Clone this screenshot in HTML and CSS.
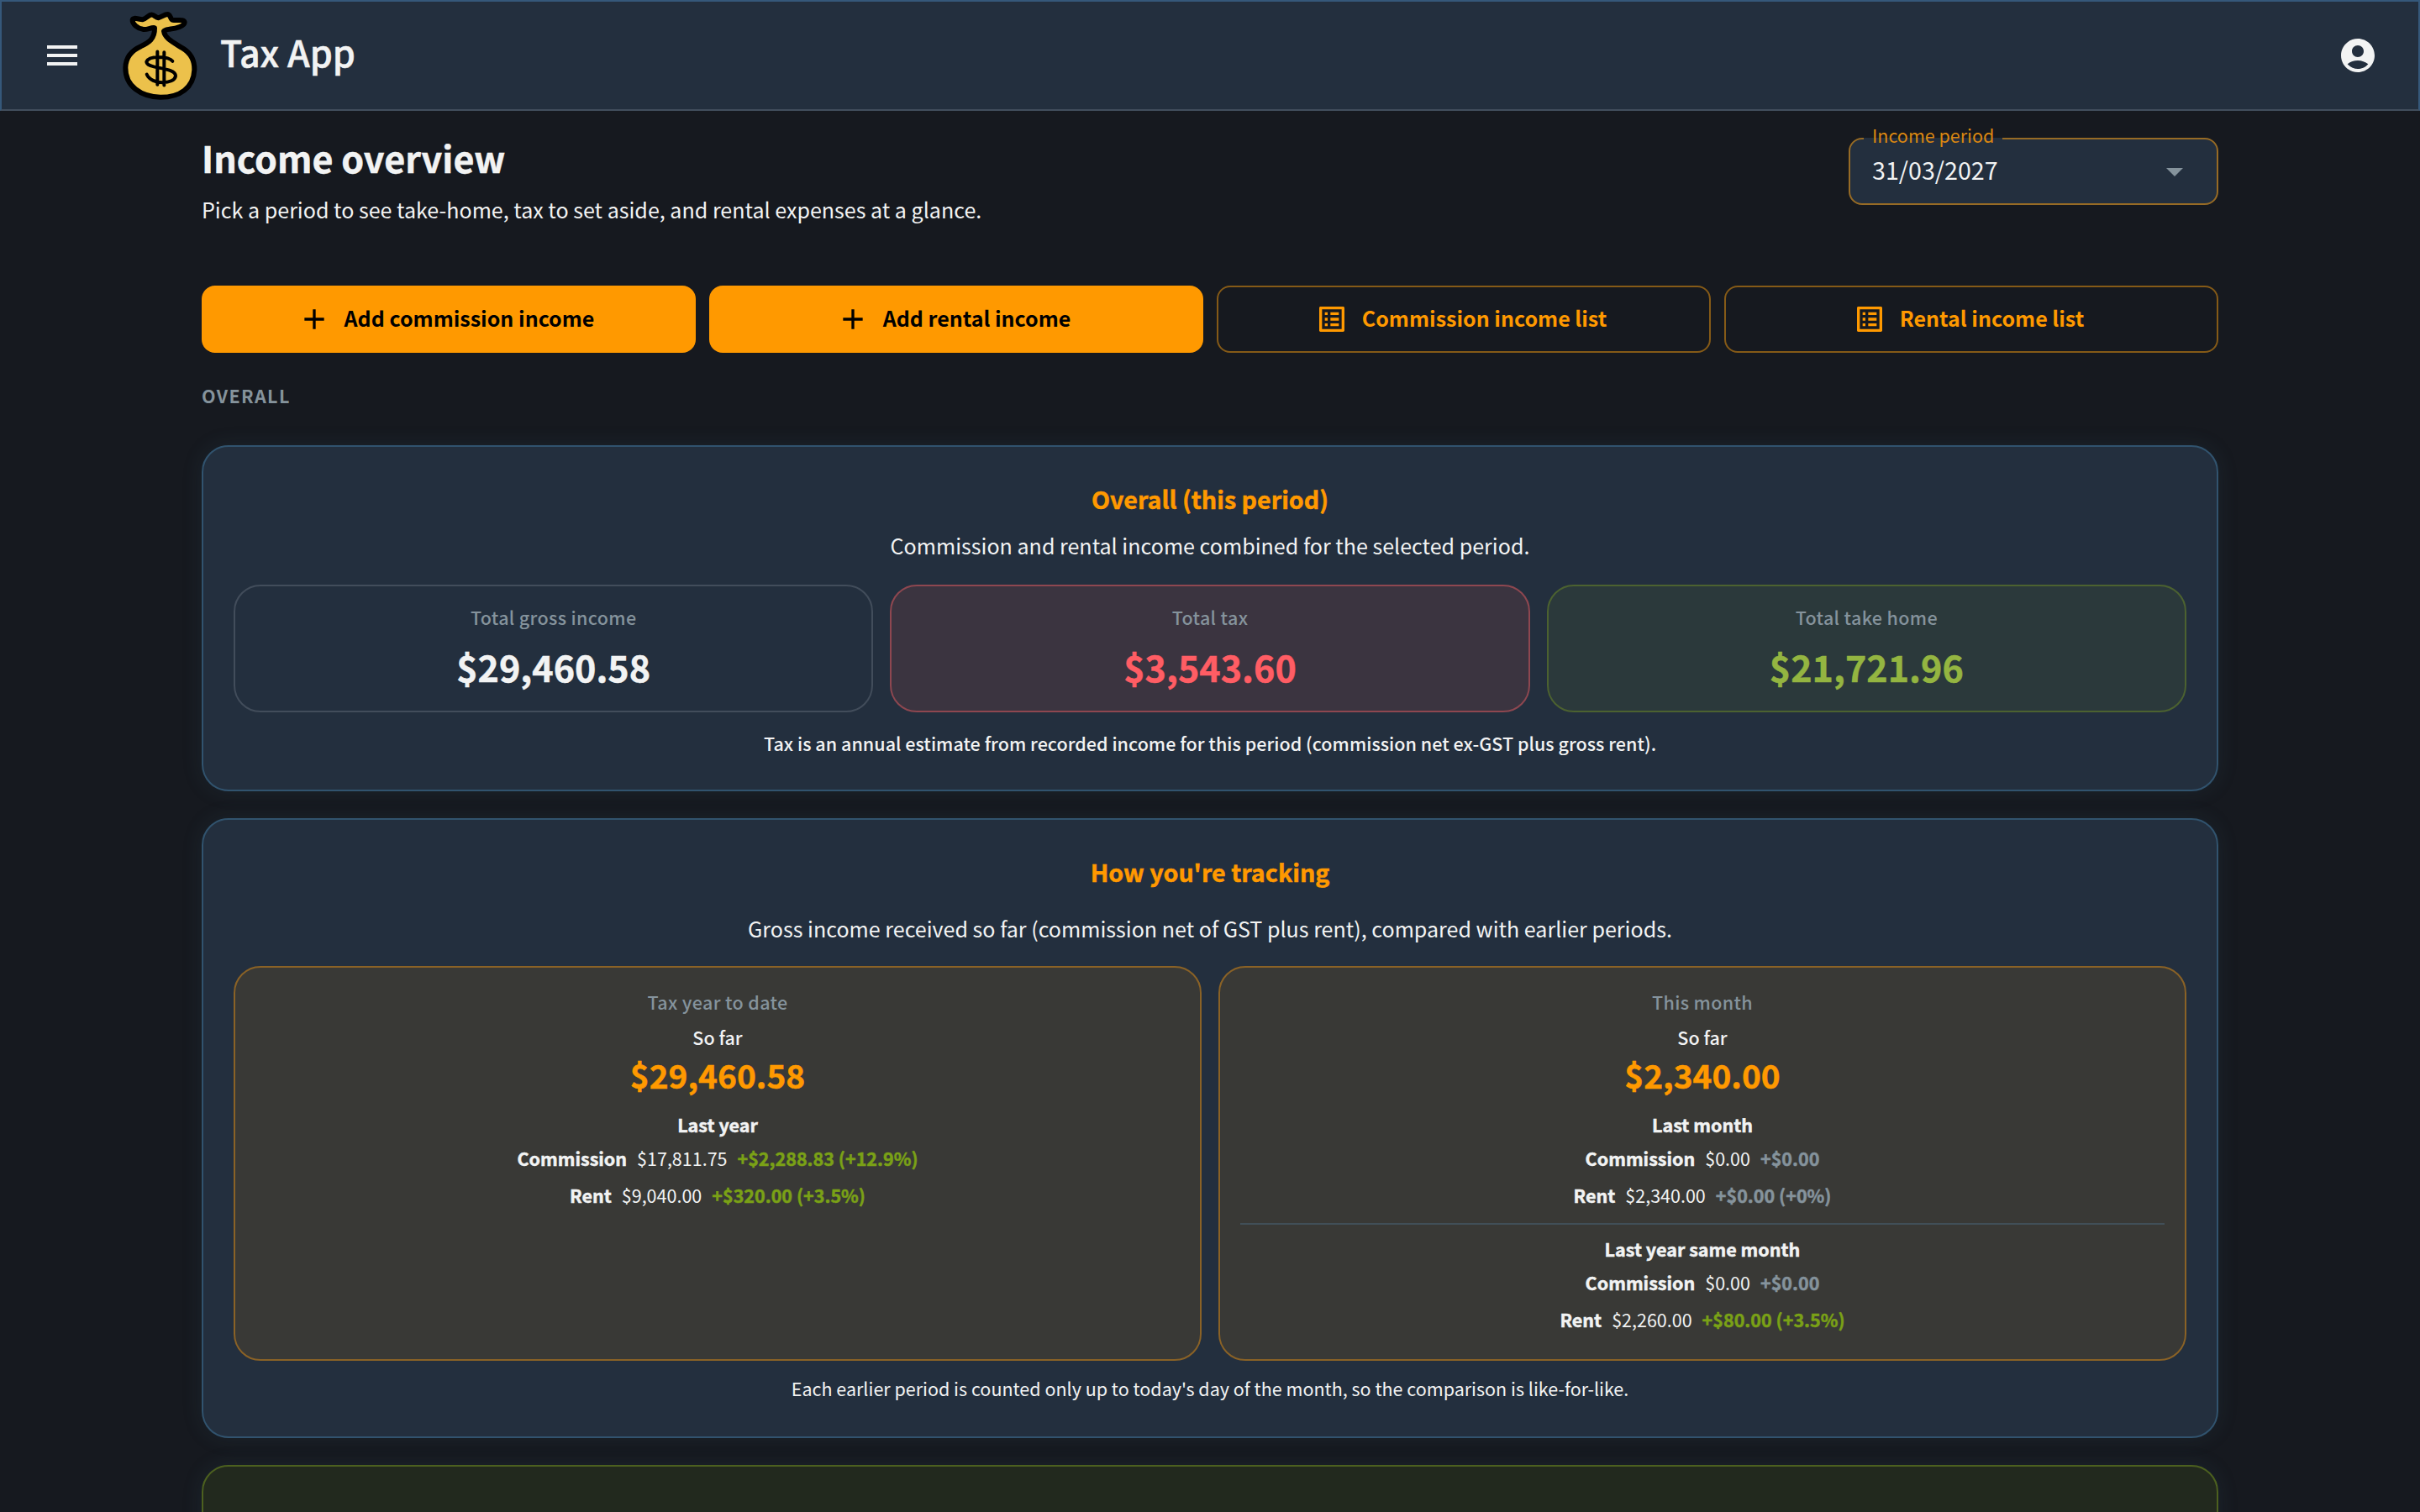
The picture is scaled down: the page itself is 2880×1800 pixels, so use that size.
FILE: index.html
```html
<!DOCTYPE html>
<html lang="en">
<head>
    <meta charset="UTF-8">
    <title>Tax App</title>
    <link rel="stylesheet" href="styles.css">
</head>
<body>

<header class="app-bar">
    <button class="icon-btn" aria-label="Open menu">
        <svg class="icon" viewBox="0 0 24 24"><path d="M3 18h18v-2H3zm0-5h18v-2H3zm0-7v2h18V6z"/></svg>
    </button>
    <!-- Money bag logo -->
    <svg class="logo" viewBox="434 38 276 320">
        <path class="bag" d="M551 98C537 96 524 106 509 103C490 100 471 84 472 70C474 58 494 68 508 68C522 66 529 51 540 51C551 51 554 62 564 62C576 60 588 48 600 50C609 54 607 68 616 70C630 73 655 66 658 78C658 92 627 100 608 102C598 104 587 104 584 110C588 138 622 152 650 170C680 188 694 214 693 248C690 312 642 346 572 346C502 344 446 306 447 240C448 200 470 178 502 164C530 150 552 138 551 98Z"/>
        <path class="dollar" d="M615 217C600 198 530 196 522 219C520 246 626 236 626 270C622 300 540 304 523 264M561 183V301M585 185V303"/>
    </svg>
    <span class="app-name">Tax App</span>
    <button class="icon-btn account-btn" aria-label="Account">
        <svg class="icon" viewBox="0 0 24 24"><path d="M12 2C6.48 2 2 6.48 2 12s4.48 10 10 10 10-4.48 10-10S17.52 2 12 2m0 4c1.93 0 3.5 1.57 3.5 3.5S13.930 13 12 13s-3.500-1.570-3.500-3.500S10.070 6 12 6m0 14c-2.030 0-4.430-.820-6.140-2.880C7.550 15.800 9.680 15 12 15s4.450.800 6.140 2.120C16.430 19.180 14.030 20 12 20"/></svg>
    </button>
</header>

<main class="container">
    <div class="page-head">
        <div>
            <h1>Income overview</h1>
            <p>Pick a period to see take-home, tax to set aside, and rental expenses at a glance.</p>
        </div>
        <div class="select">
            <span class="select-label">Income period</span>
            <span class="select-value">31/03/2027</span>
            <svg class="icon select-arrow" viewBox="0 0 24 24"><path d="m7 10 5 5 5-5z"/></svg>
        </div>
    </div>

    <div class="actions">
        <button class="btn btn-primary">
            <svg class="btn-icon" viewBox="0 0 24 24"><path d="M19 13h-6v6h-2v-6H5v-2h6V5h2v6h6z"/></svg>
            <span>Add commission income</span>
        </button>
        <button class="btn btn-primary">
            <svg class="btn-icon" viewBox="0 0 24 24"><path d="M19 13h-6v6h-2v-6H5v-2h6V5h2v6h6z"/></svg>
            <span>Add rental income</span>
        </button>
        <button class="btn btn-outline">
            <svg class="btn-icon" viewBox="0 0 24 24"><path d="M19 5v14H5V5zm1.100-2H3.900c-.500 0-.900.400-.900.900v16.200c0 .400.400.900.900.900h16.200c.400 0 .900-.500.900-.900V3.900c0-.500-.500-.900-.900-.900M11 7h6v2h-6zm0 4h6v2h-6zm0 4h6v2h-6zM7 7h2v2H7zm0 4h2v2H7zm0 4h2v2H7z"/></svg>
            <span>Commission income list</span>
        </button>
        <button class="btn btn-outline">
            <svg class="btn-icon" viewBox="0 0 24 24"><path d="M19 5v14H5V5zm1.100-2H3.900c-.500 0-.900.400-.900.900v16.200c0 .400.400.900.900.900h16.200c.400 0 .900-.500.900-.900V3.900c0-.500-.500-.900-.900-.900M11 7h6v2h-6zm0 4h6v2h-6zm0 4h6v2h-6zM7 7h2v2H7zm0 4h2v2H7zm0 4h2v2H7z"/></svg>
            <span>Rental income list</span>
        </button>
    </div>

    <p class="section-label">OVERALL</p>

    <!-- Overall totals -->
    <section class="card">
        <h2>Overall (this period)</h2>
        <p class="card-text">Commission and rental income combined for the selected period.</p>
        <div class="stats">
            <div class="stat">
                <p class="stat-label">Total gross income</p>
                <p class="stat-value">$29,460.58</p>
            </div>
            <div class="stat stat-tax">
                <p class="stat-label">Total tax</p>
                <p class="stat-value">$3,543.60</p>
            </div>
            <div class="stat stat-home">
                <p class="stat-label">Total take home</p>
                <p class="stat-value">$21,721.96</p>
            </div>
        </div>
        <p class="note note-strong">Tax is an annual estimate from recorded income for this period (commission net ex-GST plus gross rent).</p>
    </section>

    <!-- Tracking against earlier periods -->
    <section class="card card-tracking">
        <h2>How you're tracking</h2>
        <p class="card-text">Gross income received so far (commission net of GST plus rent), compared with earlier periods.</p>
        <div class="tracks">
            <div class="track">
                <p class="stat-label">Tax year to date</p>
                <p class="so-far">So far</p>
                <p class="track-value">$29,460.58</p>
                <p class="compare-title">Last year</p>
                <p class="row"><b>Commission</b><span>$17,811.75</span><b class="up">+$2,288.83 (+12.9%)</b></p>
                <p class="row"><b>Rent</b><span>$9,040.00</span><b class="up">+$320.00 (+3.5%)</b></p>
            </div>
            <div class="track">
                <p class="stat-label">This month</p>
                <p class="so-far">So far</p>
                <p class="track-value">$2,340.00</p>
                <p class="compare-title">Last month</p>
                <p class="row"><b>Commission</b><span>$0.00</span><b class="flat">+$0.00</b></p>
                <p class="row"><b>Rent</b><span>$2,340.00</span><b class="flat">+$0.00 (+0%)</b></p>
                <hr>
                <p class="compare-title">Last year same month</p>
                <p class="row"><b>Commission</b><span>$0.00</span><b class="flat">+$0.00</b></p>
                <p class="row"><b>Rent</b><span>$2,260.00</span><b class="up">+$80.00 (+3.5%)</b></p>
            </div>
        </div>
        <p class="note">Each earlier period is counted only up to today's day of the month, so the comparison is like-for-like.</p>
    </section>

    <section class="card card-green"></section>
</main>

</body>
</html>
```
FILE: styles.css
```css
* {
    box-sizing: border-box;
}

body {
    margin: 0;
    height: 100vh;
    overflow: hidden;
    background-color: #16191f;
    color: #f2f3f3;
    font-family: "Noto Sans CJK SC", "Noto Sans", sans-serif;
    font-size: 25.07px;
    line-height: 40px;
}

h1, h2, p {
    margin: 0;
}

h1, h2, b,
.app-name,
.stat-value,
.track-value,
.compare-title {
    -webkit-text-stroke: 0.5px currentColor;
}

button {
    font: inherit;
    cursor: pointer;
}

.icon {
    display: block;
    width: 48px;
    height: 48px;
    fill: currentColor;
}

/* Top bar */
.app-bar {
    display: flex;
    align-items: center;
    height: 132px;
    padding: 0 48px;
    background-color: #232f3e;
    border: 2px solid #35587a;
    border-bottom-color: #414d5c;
}

.icon-btn {
    padding: 0;
    border: none;
    background: none;
    color: #f2f3f3;
}

.logo {
    width: 92px;
    height: 107px;
    margin-left: 47px;
}

.bag {
    fill: #ecc14b;
    stroke: #000;
    stroke-width: 18;
    stroke-linejoin: round;
}

.dollar {
    fill: none;
    stroke: #000;
    stroke-width: 12;
    stroke-linecap: round;
}

.app-name {
    margin: 0 0 10px 25px;
    font-size: 43px;
    font-weight: 500;
    line-height: 56px;
}

.account-btn {
    margin-left: auto;
}

.container {
    width: 2400px;
    margin: 0 auto;
}

.page-head {
    display: flex;
    justify-content: space-between;
    align-items: flex-start;
    height: 208px;
    padding-top: 29px;
}

h1 {
    font-size: 43px;
    font-weight: 700;
    line-height: 52px;
    margin-bottom: 16px;
}

/* Period select with a notched label */
.select {
    position: relative;
    display: flex;
    align-items: center;
    justify-content: space-between;
    width: 440px;
    height: 80px;
    margin-top: 3px;
    padding: 0 26px;
    border: 2px solid #976b25;
    border-radius: 16px;
    background-color: #232f3e;
    font-size: 28.65px;
}

.select-value {
    margin-bottom: 5px;
}

.select-label {
    position: absolute;
    top: -23px;
    left: 16px;
    padding: 0 10px;
    color: #db8711;
    font-size: 21.5px;
    line-height: 36px;
    background: linear-gradient(#16191f 21px, #232f3e 21px);
}

.select-arrow {
    color: #85939c;
}

.actions {
    display: grid;
    grid-template-columns: repeat(4, 1fr);
    gap: 16px;
}

.btn {
    display: flex;
    align-items: center;
    justify-content: center;
    gap: 16px;
    height: 80px;
    border-radius: 16px;
    font-size: 25px;
    font-weight: 700;
}

.btn span {
    margin-bottom: 5px;
}

.btn-icon {
    width: 40px;
    height: 40px;
    margin-left: -7px;
    fill: currentColor;
}

.btn-primary {
    background-color: #ff9900;
    border: none;
    color: #000;
}

.btn-outline {
    background: none;
    border: 2px solid #855a17;
    color: #ff9900;
}

.section-label {
    margin: 33px 0 41px;
    color: #85939c;
    font-size: 21.5px;
    font-weight: 700;
    line-height: 36px;
    letter-spacing: 1.4px;
}

/* Cards */
.card {
    margin-bottom: 32px;
    padding: 37px 36px;
    border: 2px solid #31536e;
    border-radius: 32px;
    background-color: #232f3e;
    box-shadow: 0 0 24px rgba(60, 100, 120, 0.16);
    text-align: center;
}

h2 {
    color: #ff9900;
    font-size: 28.65px;
    font-weight: 700;
    line-height: 50px;
    margin-bottom: 10px;
}

.card-text {
    margin-bottom: 27px;
}

.stats {
    display: grid;
    grid-template-columns: repeat(3, 1fr);
    gap: 20px;
    margin-bottom: 19px;
}

.stat {
    height: 152px;
    padding: 19px 24px;
    border: 2px solid #424d5b;
    border-radius: 32px;
}

.stat-tax {
    background-color: #3b3440;
    border-color: #8e4750;
}

.stat-home {
    background-color: #2b393b;
    border-color: #4c6230;
}

.stat-label {
    color: #85939c;
    font-size: 21.5px;
    font-weight: 500;
    line-height: 36px;
    letter-spacing: 0.35px;
}

.stat-value {
    margin-top: 12px;
    font-size: 43px;
    font-weight: 700;
    line-height: 56px;
}

.stat-tax .stat-value {
    color: #ff5d64;
}

.stat-home .stat-value {
    color: #94b541;
}

.note {
    font-size: 21.5px;
    line-height: 36px;
}

.note-strong {
    font-weight: 500;
    letter-spacing: 0.02px;
}

/* Tracking card */
.card-tracking {
    padding-bottom: 39px;
}

.card-tracking h2 {
    margin-bottom: 22px;
}

.card-tracking .card-text {
    margin-bottom: 25px;
}

.tracks {
    display: grid;
    grid-template-columns: repeat(2, 1fr);
    gap: 20px;
    margin-bottom: 15px;
}

.track {
    padding: 23px 24px 29px;
    border: 2px solid #8a6226;
    border-radius: 32px;
    background-color: #393936;
    font-size: 21.5px;
    line-height: 36px;
}

.so-far {
    margin: 6px 0 2px;
    font-weight: 500;
}

.track-value {
    margin-bottom: 18px;
    color: #ff9900;
    font-size: 38.8px;
    font-weight: 700;
    line-height: 48px;
}

.compare-title {
    margin-bottom: 4px;
    font-weight: 700;
}

.row {
    display: flex;
    justify-content: center;
    gap: 12px;
}

.row + .row {
    margin-top: 8px;
}

.up {
    color: #7aa116;
}

.flat {
    color: #85939c;
}

hr {
    height: 2px;
    margin: 15px 0 11px;
    border: none;
    background-color: #414f58;
}

.card-green {
    height: 400px;
    background-color: #22291e;
    border-color: #4c601f;
}
```
